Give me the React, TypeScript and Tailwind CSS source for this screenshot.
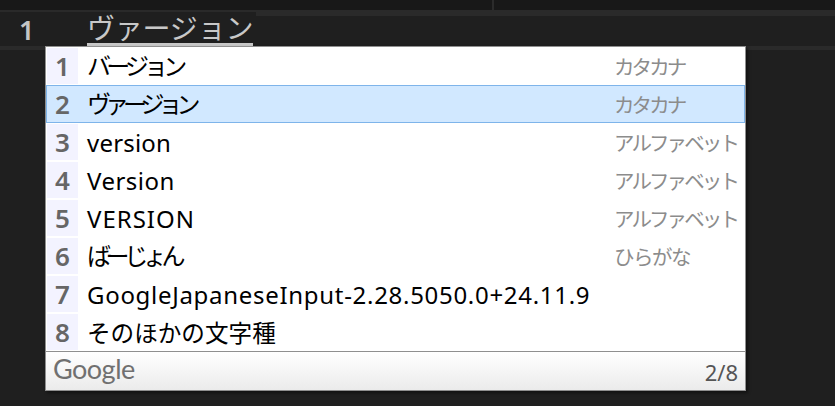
import React from 'react';

const font = { fontFamily: '"Noto Sans", "Noto Sans CJK JP", sans-serif' };

const candidates = [
  { label: 'バージョン', labelClass: 'text-[24px] tracking-[-4.8px]', note: 'カタカナ', noteClass: 'tracking-[-2.9px]' },
  { label: 'ヴァージョン', labelClass: 'text-[24px] tracking-[-6px]', note: 'カタカナ', noteClass: 'tracking-[-2.9px]', selected: true },
  { label: 'version', labelClass: 'text-[24px] tracking-[0.2px] pt-[2px]', note: 'アルファベット', noteClass: 'tracking-[-2.9px]' },
  { label: 'Version', labelClass: 'text-[24px] tracking-[0.5px] pt-[2px]', note: 'アルファベット', noteClass: 'tracking-[-2.9px]' },
  { label: 'VERSION', labelClass: 'text-[24px] tracking-[1px] pt-[2px]', note: 'アルファベット', noteClass: 'tracking-[-2.9px]' },
  { label: 'ばーじょん', labelClass: 'text-[24px] tracking-[-5.4px]', note: 'ひらがな', noteClass: 'tracking-[-1.5px]' },
  { label: 'GoogleJapaneseInput-2.28.5050.0+24.11.9', labelClass: 'text-[24px] tracking-[0.7px] pt-[2px]', note: '', noteClass: '' },
  { label: 'そのほかの文字種', labelClass: 'text-[23.6px] pt-[2px]', note: '', noteClass: '' },
];

const CandidateRow: React.FC<{
  index: number;
  label: string;
  labelClass: string;
  note: string;
  noteClass: string;
  selected?: boolean;
}> = ({ index, label, labelClass, note, noteClass, selected }) => (
  <div
    className={`flex h-[38px] items-center border ${
      selected ? 'border-[#7eb4ea] bg-[#d1e8ff]' : 'border-transparent'
    }`}
  >
    <div
      className={`flex h-full w-[31px] shrink-0 items-center justify-center text-[26px] font-semibold text-[#666666] ${
        selected ? '' : 'bg-[#f3f3ff]'
      }`}
    >
      {index}
    </div>
    <div className={`ml-[9px] flex-1 whitespace-nowrap leading-[34px] text-black ${labelClass}`}>{label}</div>
    <div className={`w-[130px] shrink-0 whitespace-nowrap pt-[3px] text-[20.5px] text-[#8c8c8c] ${noteClass}`}>{note}</div>
  </div>
);

const App: React.FC = () => {
  return (
    <div className="relative h-[406px] w-[835px] overflow-hidden bg-[#1f1f1f]" style={font}>
      {/* Tab strip */}
      <div className="flex h-[10px] bg-[#181818]">
        <div className="w-[494px] border-r-2 border-[#2b2b2b]" />
      </div>

      {/* Current line */}
      <div className="h-[2px] bg-[#2a2a2a]" />
      <div className="flex h-[4px]">
        <div className="w-[256px]" />
        <div className="flex-1 bg-[#2a2a2a]" />
      </div>
      <div className="relative flex h-[30px] items-end">
        <div className="w-[19px]" />
        <div className="w-[68px] pb-[1px] text-[27px] font-semibold leading-[30px] text-[#c5c5c5]">1</div>
        <div className="h-[31px] w-[166px] whitespace-nowrap border-b-[3px] border-[#c8c8c8] text-[28px] leading-[27px] tracking-[-0.2px] text-[#c8c8c8]">
          ヴァージョン
        </div>
      </div>
      <div className="h-[4px] bg-[#2a2a2a]" />

      {/* Candidate window */}
      <div className="absolute left-[45px] top-[46px] w-[701px] border border-[#8f8f8f] bg-white shadow-[2px_2px_3px_rgba(0,0,0,0.45)]">
        {candidates.map((c, i) => (
          <CandidateRow key={c.label} index={i + 1} {...c} />
        ))}
        <div className="flex h-[39px] items-center justify-between border-t border-[#8f8f8f] bg-gradient-to-b from-white to-[#ebebeb] pl-[7px] pr-[7px]">
          <span className="pb-[5px] text-[27px] font-normal leading-[34px] tracking-[-0.5px] text-[#707070]" style={{ fontFamily: 'Lato, sans-serif' }}>
            Google
          </span>
          <span className="pt-[3px] text-[22px] text-[#555555]">2/8</span>
        </div>
      </div>
    </div>
  );
};

export default App;
